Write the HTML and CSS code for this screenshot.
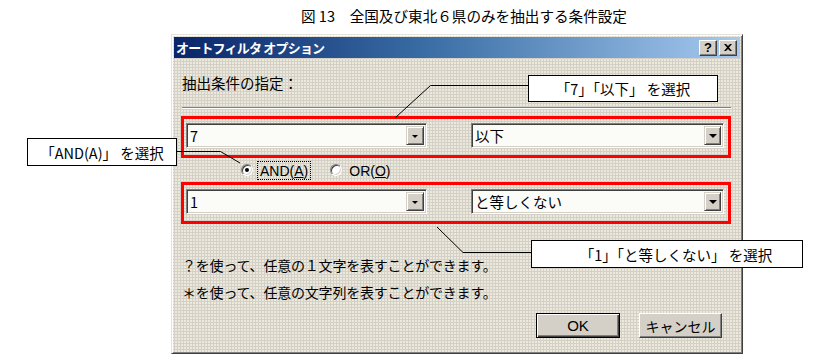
FILE: index.html
```html
<!DOCTYPE html>
<html lang="ja">
<head>
<meta charset="utf-8">
<title>オートフィルタ オプション</title>
<link rel="stylesheet" href="styles.css">
</head>
<body>
<div class="page">
  <p class="caption">図 13　全国及び東北６県のみを抽出する条件設定</p>
  <div class="stage">
    <div class="dialog">
      <div class="titlebar">
        <span class="title">オートフィルタ オプション</span>
        <div class="tbtns">
          <span class="tbtn help-btn">?</span>
          <span class="tbtn close-btn">
            <svg width="8" height="7" viewBox="0 0 8 7"><path d="M0 0h2l2 2 2-2h2L5 3.5 8 7H6L4 5 2 7H0l3-3.5z" fill="#000"/></svg>
          </span>
        </div>
      </div>
      <div class="content">
        <div class="label">抽出条件の指定：</div>
        <div class="sep"></div>
        <div class="cond">
          <div class="combo combo-val"><span class="ctext">7</span><span class="drop drop-small"><i class="arrow small"></i></span></div>
          <div class="combo combo-op"><span class="ctext">以下</span><span class="drop"><i class="arrow"></i></span></div>
        </div>
        <div class="radios">
          <span class="radio checked"><i class="dot"></i></span>
          <span class="rlabel focus">AND(<u>A</u>)</span>
          <span class="radio second"></span>
          <span class="rlabel">OR(<u>O</u>)</span>
        </div>
        <div class="cond">
          <div class="combo combo-val"><span class="ctext">1</span><span class="drop drop-small"><i class="arrow small"></i></span></div>
          <div class="combo combo-op"><span class="ctext">と等しくない</span><span class="drop"><i class="arrow"></i></span></div>
        </div>
        <div class="helptext">
          <p>？を使って、任意の１文字を表すことができます。</p>
          <p>＊を使って、任意の文字列を表すことができます。</p>
        </div>
        <div class="buttons">
          <span class="btn default">OK</span>
          <span class="btn">キャンセル</span>
        </div>
      </div>
    </div>
    <svg class="leaders" width="814" height="323" viewBox="0 0 814 323">
      <polyline points="528.5,51.5 430.5,51.5 395.5,83.5" fill="none" stroke="#000" stroke-width="1"/>
      <polyline points="177,117.5 220.5,117.5 240,129" fill="none" stroke="#000" stroke-width="1"/>
      <polyline points="437,193 463,218.5 531,218.5" fill="none" stroke="#000" stroke-width="1"/>
    </svg>
    <div class="callout c1">「7」「以下」 を選択</div>
    <div class="callout c2">「AND(A)」 を選択</div>
    <div class="callout c3">「1」「と等しくない」 を選択</div>
  </div>
</div>
</body>
</html>
```
FILE: styles.css
```css
html, body {
  margin: 0;
  padding: 0;
  background: #fff;
}
body {
  width: 814px;
  height: 357px;
  overflow: hidden;
  font-family: "Noto Sans CJK JP", sans-serif;
  color: #000;
}
.caption {
  margin: 0;
  height: 34px;
  padding-left: 301px;
  font-size: 14.6px;
  line-height: 32px;
  white-space: nowrap;
}
.stage {
  position: relative;
  height: 323px;
}
.dialog {
  margin-left: 171px;
  width: 572px;
  height: 320px;
  box-sizing: border-box;
  border: 1px solid;
  border-color: #e4e2dc #404040 #404040 #e4e2dc;
  box-shadow: inset 1px 1px #fff, inset -1px -1px #808080;
  padding: 2px;
  background-color: #d4d0c8;
  background-image: radial-gradient(circle at 1px 1px, #ecebdc 0.7px, transparent 0.9px);
  background-size: 3px 3px;
  display: flex;
  flex-direction: column;
}
.titlebar {
  height: 21px;
  background: linear-gradient(90deg, #0a246a 0%, #3a6ea5 45%, #a6caf0 100%);
  display: flex;
  align-items: center;
  justify-content: space-between;
  padding: 0 3px 0 2px;
}
.title {
  color: #fff;
  font-size: 13px;
  font-weight: bold;
  letter-spacing: -0.8px;
  white-space: nowrap;
}
.tbtns {
  display: flex;
  gap: 2px;
}
.tbtn {
  width: 18px;
  height: 16px;
  box-sizing: border-box;
  background: #d4d0c8;
  border: 1px solid;
  border-color: #fff #404040 #404040 #fff;
  box-shadow: inset -1px -1px #808080;
  display: flex;
  align-items: center;
  justify-content: center;
  font-family: "Liberation Sans", sans-serif;
  font-weight: bold;
  font-size: 13px;
  line-height: 1;
}
.content {
  flex: 1;
  display: flex;
  flex-direction: column;
}
.label {
  margin: 15px 0 0 8px;
  height: 20px;
  line-height: 20px;
  font-size: 14.5px;
  white-space: nowrap;
}
.sep {
  margin: 14px 9px 0 8px;
  height: 0;
  border-top: 1px solid #808080;
  border-bottom: 1px solid #fff;
}
.cond {
  margin: 7px 0 0 7px;
  width: 550px;
  height: 42px;
  box-sizing: border-box;
  border: 3px solid #ff0000;
  padding: 4px 4px 0 2px;
  display: flex;
  justify-content: space-between;
  align-items: flex-start;
}
.radios + .cond {
  margin-top: 0;
}
.combo {
  height: 25px;
  box-sizing: border-box;
  border: 1px solid;
  border-color: #808080 #fff #fff #808080;
  box-shadow: inset 1px 1px #404040, inset -1px -1px #d4d0c8;
  background: #fbfbf8;
  display: flex;
  align-items: center;
  justify-content: space-between;
  padding: 2px 2px 2px 3px;
}
.combo-val { width: 241px; }
.combo-op { width: 253px; }
.ctext {
  font-size: 14.5px;
  line-height: 19px;
  white-space: nowrap;
}
.drop {
  width: 17px;
  height: 19px;
  box-sizing: border-box;
  background: #d4d0c8;
  border: 1px solid;
  border-color: #d4d0c8 #404040 #404040 #d4d0c8;
  box-shadow: inset 1px 1px #fff, inset -1px -1px #808080;
  display: flex;
  align-items: center;
  justify-content: center;
}
.drop-small {
  width: 18px;
}
.arrow {
  width: 0;
  height: 0;
  border-left: 4px solid transparent;
  border-right: 4px solid transparent;
  border-top: 4px solid #000;
  margin-top: 1px;
}
.arrow.small {
  border-left-width: 3px;
  border-right-width: 3px;
  border-top-width: 3px;
}
.radios {
  height: 24px;
  display: flex;
  align-items: center;
  padding-left: 67px;
  font-family: "Liberation Sans", "Noto Sans CJK JP", sans-serif;
  font-size: 14px;
}
.radio {
  width: 12px;
  height: 12px;
  box-sizing: border-box;
  border-radius: 50%;
  background: #fff;
  border: 1px solid;
  border-color: #808080 #fff #fff #808080;
  box-shadow: inset 1px 1px #404040, inset -1px -1px #d4d0c8;
  display: flex;
  align-items: center;
  justify-content: center;
}
.dot {
  width: 4px;
  height: 4px;
  border-radius: 50%;
  background: #000;
}
.radio.second {
  margin-left: 19px;
}
.rlabel {
  margin-left: 4px;
  padding: 0 2px;
  height: 19px;
  line-height: 19px;
  box-sizing: border-box;
  border: 1px solid transparent;
}
.rlabel.focus {
  border: 1px dotted #000;
}
.helptext {
  margin: 28px 0 0 8px;
  font-size: 14px;
  letter-spacing: -0.2px;
}
.helptext p {
  margin: 0;
  line-height: 27px;
  white-space: nowrap;
}
.buttons {
  margin-top: 7px;
  display: flex;
  justify-content: flex-end;
  gap: 19px;
  padding-right: 18px;
}
.btn {
  width: 83px;
  height: 25px;
  box-sizing: border-box;
  background: #d4d0c8;
  border: 1px solid;
  border-color: #fff #404040 #404040 #fff;
  box-shadow: inset -1px -1px #808080;
  display: flex;
  align-items: center;
  justify-content: center;
  font-size: 14px;
}
.btn.default {
  width: 84px;
  border: 1px solid #000;
  box-shadow: inset 1px 1px #fff, inset -1px -1px #404040, inset -2px -2px #808080;
  font-family: "Liberation Sans", sans-serif;
  font-size: 15px;
}
.leaders {
  position: absolute;
  left: 0;
  top: 0;
  pointer-events: none;
}
.callout {
  position: absolute;
  box-sizing: border-box;
  border: 1px solid #000;
  background: #fff;
  display: flex;
  align-items: center;
  justify-content: center;
  font-size: 14.5px;
  white-space: nowrap;
}
.c1 { left: 528px; top: 41px; width: 190px; height: 27px; }
.c2 { left: 27px; top: 104px; width: 150px; height: 28px; }
.c3 { left: 531px; top: 206px; width: 272px; height: 28px; padding-left: 18px; }
```
